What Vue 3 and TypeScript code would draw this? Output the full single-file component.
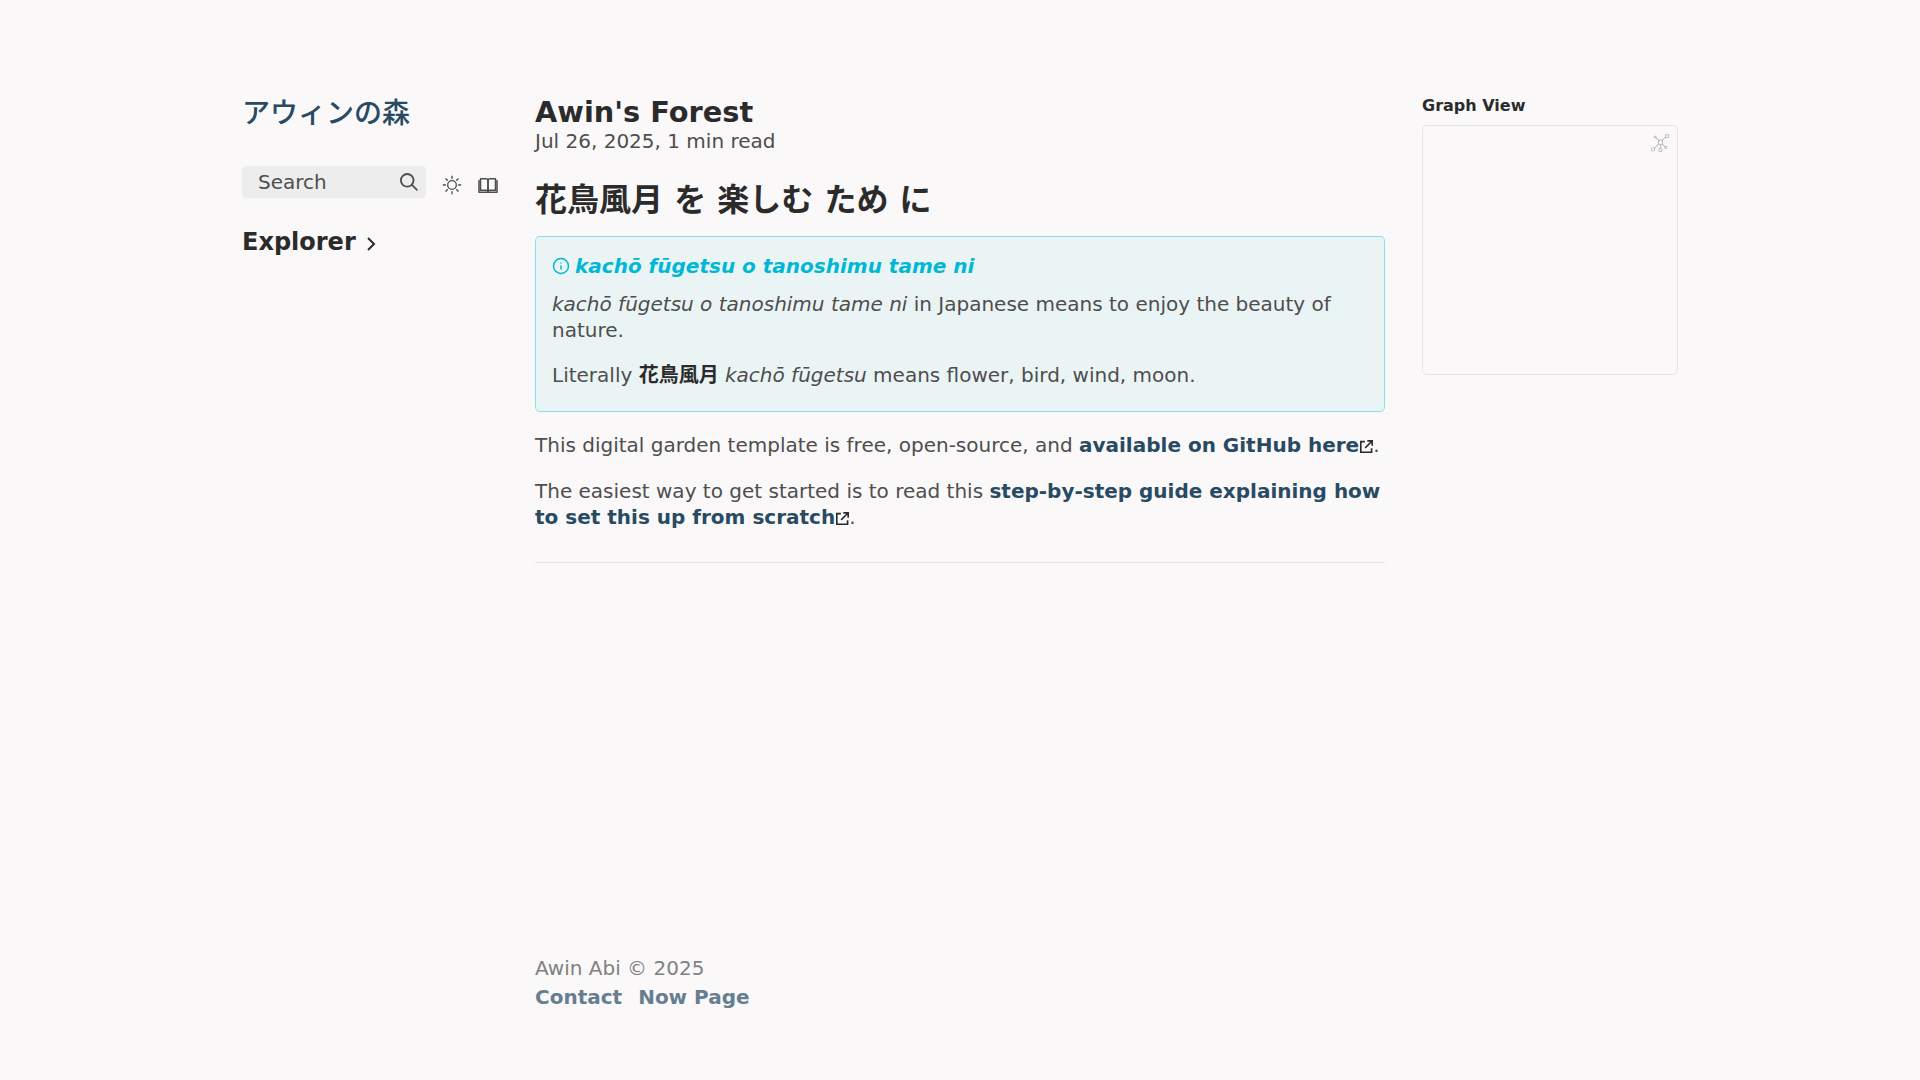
<script setup lang="ts">
const title = "アウィンの森";
</script>

<template>
  <div class="page">
    <aside class="left">
      <h2 class="site-title">{{ title }}</h2>
      <div class="tools">
        <div class="search">
          <span class="search-label">Search</span>
          <svg class="search-icon" viewBox="0 0 19.9 19.7" fill="none">
            <path stroke-linecap="square" d="M18.5 18.3l-5.4-5.4" />
            <circle cx="8" cy="8" r="7" />
          </svg>
        </div>
        <svg class="sun" viewBox="0 0 24 24" fill="none" stroke="currentColor" stroke-width="1.6" stroke-linecap="round">
          <circle cx="12" cy="12" r="5.2" />
          <path d="M12 1.5v2.6M12 19.9v2.6M1.5 12h2.6M19.9 12h2.6M4.6 4.6l1.8 1.8M17.6 17.6l1.8 1.8M4.6 19.4l1.8-1.8M17.6 6.4l1.8-1.8" />
        </svg>
        <svg class="book" viewBox="0 0 24 24" fill="none" stroke="currentColor" stroke-width="1.8" stroke-linejoin="round">
          <path d="M3 4.5h6.5c1.4 0 2.5.8 2.5 2.2V20c0-1-.9-1.700-2-1.700H3z" />
          <path d="M21 4.500h-6.500c-1.400 0-2.500.8-2.500 2.200V20c0-1 .9-1.700 2-1.700H21z" />
          <path d="M1.200 6v14.800h21.600V6" />
        </svg>
      </div>
      <div class="explorer">
        <span class="explorer-title">Explorer</span>
        <svg class="chev" viewBox="5 8 14 8" fill="none" stroke="currentColor" stroke-width="2">
          <path d="M9 18l6-6-6-6" />
        </svg>
      </div>
    </aside>

    <main class="center">
      <h1 class="doc-title">Awin's Forest</h1>
      <p class="meta">Jul 26, 2025, 1 min read</p>
      <h2 class="heading">花鳥風月 を 楽しむ ため に</h2>
      <section class="callout">
        <div class="callout-title">
          <svg class="info" viewBox="0 0 24 24" fill="none" stroke="currentColor" stroke-width="2" stroke-linecap="round" stroke-linejoin="round">
            <circle cx="12" cy="12" r="10" />
            <path d="M12 16v-4M12 8h.01" />
          </svg>
          <em>kachō fūgetsu o tanoshimu tame ni</em>
        </div>
        <p><em>kachō fūgetsu o tanoshimu tame ni</em> in Japanese means to enjoy the beauty of nature.</p>
        <p>Literally <strong>花鳥風月</strong> <em>kachō fūgetsu</em> means flower, bird, wind, moon.</p>
      </section>
      <p class="para">This digital garden template is free, open-source, and <a>available on GitHub here<svg class="ext" viewBox="0 0 512 512"><path d="M320 0H288V64h32 82.7L201.4 265.4 178.7 288 224 333.3l22.6-22.6L448 109.3V192v32h64V192 32 0H480 320zM32 32H0V64 480v32H32 456h32V480 352 320H424v32 96H64V96h96 32V32H160 32z" /></svg></a>.</p>
      <p class="para">The easiest way to get started is to read this <a>step-by-step guide explaining how to set this up from scratch<svg class="ext" viewBox="0 0 512 512"><path d="M320 0H288V64h32 82.7L201.4 265.4 178.7 288 224 333.3l22.6-22.6L448 109.3V192v32h64V192 32 0H480 320zM32 32H0V64 480v32H32 456h32V480 352 320H424v32 96H64V96h96 32V32H160 32z" /></svg></a>.</p>
      <hr class="rule" />
      <div class="spacer"></div>
      <footer class="footer">
        <p>Awin Abi © 2025</p>
        <div class="links"><a>Contact</a><a>Now Page</a></div>
      </footer>
    </main>

    <aside class="right">
      <h3 class="graph-title">Graph View</h3>
      <div class="graph">
        <svg class="graph-icon" viewBox="0 0 55 55" fill="currentColor">
          <path d="M49,0c-3.309,0-6,2.691-6,6c0,1.035,0.263,2.009,0.726,2.86l-9.829,9.829C32.542,17.634,30.846,17,29,17s-3.542,0.634-4.898,1.688l-7.669-7.669C16.785,10.424,17,9.74,17,9c0-2.206-1.794-4-4-4S9,6.794,9,9s1.794,4,4,4c0.74,0,1.424-0.215,2.019-0.567l7.669,7.669C21.634,21.458,21,23.154,21,25s0.634,3.542,1.688,4.897L10.024,42.562C8.958,41.595,7.549,41,6,41c-3.309,0-6,2.691-6,6s2.691,6,6,6s6-2.691,6-6c0-1.035-0.263-2.009-0.726-2.86l12.829-12.829c1.106,0.86,2.44,1.436,3.898,1.619v10.16c-2.833,0.478-5,2.942-5,5.91c0,3.309,2.691,6,6,6s6-2.691,6-6c0-2.967-2.167-5.431-5-5.91v-10.16c1.458-0.183,2.792-0.759,3.898-1.619l7.669,7.669C41.215,39.576,41,40.26,41,41c0,2.206,1.794,4,4,4s4-1.794,4-4s-1.794-4-4-4c-0.74,0-1.424,0.215-2.019,0.567l-7.669-7.669C36.366,28.542,37,26.846,37,25s-0.634-3.542-1.688-4.897l9.665-9.665C46.042,11.405,47.451,12,49,12c3.309,0,6-2.691,6-6S52.309,0,49,0z M11,9c0-1.103,0.897-2,2-2s2,0.897,2,2s-0.897,2-2,2S11,10.103,11,9z M6,51c-2.206,0-4-1.794-4-4s1.794-4,4-4s4,1.794,4,4S8.206,51,6,51z M33,49c0,2.206-1.794,4-4,4s-4-1.794-4-4s1.794-4,4-4S33,46.794,33,49z M29,31c-3.309,0-6-2.691-6-6s2.691-6,6-6s6,2.691,6,6S32.309,31,29,31z M47,41c0,1.103-0.897,2-2,2s-2-0.897-2-2s0.897-2,2-2S47,39.897,47,41z M49,10c-2.206,0-4-1.794-4-4s1.794-4,4-4s4,1.794,4,4S51.206,10,49,10z" />
        </svg>
      </div>
    </aside>
  </div>
</template>

<style>
html, body { margin: 0; background: #faf8f8; }
</style>

<style scoped>
.page {
  display: flex;
  width: 1920px;
  height: 1080px;
  box-sizing: border-box;
  padding: 96px 242px 0 242px;
  font-family: "DejaVu Sans", "Noto Sans CJK JP", sans-serif;
  color: #4e4e4e;
  background: #faf8f8;
  overflow: hidden;
}
p, h1, h2, h3 { margin: 0; }
.left { width: 293px; flex: none; display: flex; flex-direction: column; }
.site-title { font-size: 28px; font-weight: 500; color: #284b63; line-height: 36px; }
.tools { display: flex; align-items: center; margin-top: 34px; }
.search { width: 184px; height: 32px; box-sizing: border-box; background: #ededed; border-radius: 4px; display: flex; align-items: center; justify-content: space-between; padding: 0 8px 0 16px; font-size: 20px; }
.search-icon { width: 18px; height: 18px; stroke: #4e4e4e; stroke-width: 2px; }
.sun { width: 20px; height: 20px; margin: 6px 0 0 16px; color: #4e4e4e; }
.book { width: 20px; height: 20px; margin: 6px 0 0 16px; color: #4e4e4e; }
.explorer { height: 32px; margin-top: 28px; overflow: hidden; display: flex; align-items: flex-start; color: #2b2b2b; }
.explorer-title { font-size: 24px; font-weight: 700; line-height: 32px; }
.chev { width: 14px; height: 16px; margin: 10px 0 0 8px; }

.center { width: 850px; flex: none; display: flex; flex-direction: column; }
.doc-title { font-size: 28.800px; font-weight: 700; color: #2b2b2b; line-height: 32px; }
.meta { font-size: 20px; line-height: 26px; }
.heading { font-size: 32px; font-weight: 700; color: #2b2b2b; line-height: 42px; margin-top: 25px; }
.callout { margin-top: 15px; height: 176px; box-sizing: border-box; border: 1px solid #00b8d466; background: #00b8d410; border-radius: 5px; padding: 16px; font-size: 20px; line-height: 26px; }
.callout-title { display: flex; align-items: center; color: #00b8d4; font-weight: 700; margin-bottom: 12px; }
.info { width: 18px; height: 18px; margin-right: 5px; }
.callout p + p { margin-top: 19px; }
.callout strong { color: #2b2b2b; }
.para { font-size: 20px; line-height: 26px; margin-top: 20px; }
a { color: #284b63; font-weight: 700; }
.ext { width: 13px; height: 13px; margin-left: 1px; fill: #2b2b2b; vertical-align: -1px; }
.rule { width: 100%; border: 0; height: 1px; background: #e5e5e5; margin: 32px 0 0; }
.spacer { flex: 1; }
.footer { opacity: 0.7; font-size: 20px; padding-bottom: 68px; line-height: 29px; }
.links { display: flex; gap: 16px; }
.right { width: 256px; flex: none; margin-left: 37px; }
.graph-title { font-size: 16px; font-weight: 700; color: #2b2b2b; line-height: 20px; margin-bottom: 9px; }
.graph { position: relative; height: 250px; box-sizing: border-box; border: 1px solid #e5e5e5; border-radius: 5px; }
.graph-icon { position: absolute; top: 8px; right: 8px; width: 18px; height: 18px; color: #4e4e4e; opacity: 0.5; }
</style>
